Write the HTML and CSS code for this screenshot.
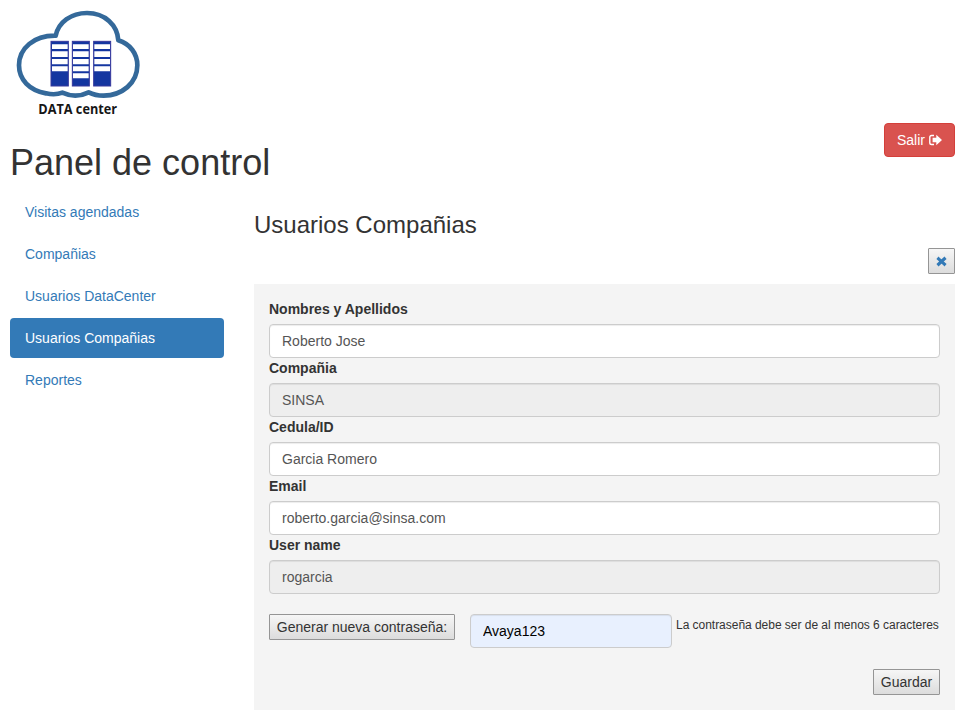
FILE: index.html
```html
<!DOCTYPE html>
<html lang="es">
<head>
<meta charset="utf-8">
<title>Panel de control</title>
<link rel="stylesheet" href="styles.css">
</head>
<body>
<header class="top">
  <svg class="logo" viewBox="0 0 480 375" role="img" aria-label="DATA center">
    <path d="M167 107C176 66 214 39 261 39C315 39 352 75 355 121C390 132 412 160 412 196C412 250 366 286 311 287C294 287 278 283 266 277C240 290 211 289 187 278C172 284 155 284 138 280C88 271 57 239 57 196C57 145 102 106 167 107Z" fill="none" stroke="#34699a" stroke-width="14" stroke-linejoin="round"/>
    <g fill="#1436a0" stroke="#36389c" stroke-width="3">
      <rect x="153" y="124" width="52" height="134"/>
      <rect x="217" y="124" width="51" height="134"/>
      <rect x="281" y="124" width="51" height="134"/>
    </g>
    <g fill="#fff">
      <path d="M156 133h47v14h-47zM156 154h47v17h-47zM156 177h47v16h-47zM156 199h47v15h-47z"/>
      <path d="M219 133h47v14h-47zM219 154h47v17h-47zM219 177h47v16h-47zM219 199h47v15h-47zM219 220h47v15h-47z"/>
      <path d="M283 133h47v14h-47zM283 154h47v17h-47zM283 177h47v16h-47zM283 199h47v15h-47z"/>
    </g>
    <text class="logo-text" x="115" y="341" textLength="236" lengthAdjust="spacingAndGlyphs">DATA center</text>
  </svg>
  <button class="exit" type="button">Salir
    <svg class="exit-icon" viewBox="0 0 13 12" aria-hidden="true"><path d="M5 1.5H2.6Q.8 1.5 .8 3.3V8.7Q.8 10.5 2.6 10.5H5" fill="none" stroke="#fff" stroke-width="1.4"/><path d="M7.3 .8L13 6L7.3 11.2V8.2H3.6V3.8H7.3Z" fill="#fff"/></svg>
  </button>
</header>
<h1 class="title">Panel de control</h1>
<div class="columns">
  <nav class="menu">
    <a class="item" href="#">Visitas agendadas</a>
    <a class="item" href="#">Compañias</a>
    <a class="item" href="#">Usuarios DataCenter</a>
    <a class="item active" href="#">Usuarios Compañias</a>
    <a class="item" href="#">Reportes</a>
  </nav>
  <main class="content">
    <h3 class="subtitle">Usuarios Compañias</h3>
    <div class="toolbar">
      <button class="btn close" type="button" aria-label="Cerrar"><svg class="close-icon" viewBox="0 0 11 11" aria-hidden="true"><path d="M2.6 2.8L8.4 8.2M8.4 2.8L2.6 8.2" stroke="#337ab7" stroke-width="3.1" stroke-linecap="square"/></svg></button>
    </div>
    <form class="panel">
      <label class="label" for="nombre">Nombres y Apellidos</label>
      <input class="field" id="nombre" value="Roberto Jose">
      <label class="label" for="comp">Compañia</label>
      <input class="field" id="comp" value="SINSA" readonly>
      <label class="label" for="cedula">Cedula/ID</label>
      <input class="field" id="cedula" value="Garcia Romero">
      <label class="label" for="email">Email</label>
      <input class="field" id="email" value="roberto.garcia@sinsa.com">
      <label class="label" for="user">User name</label>
      <input class="field" id="user" value="rogarcia" readonly>
      <div class="password">
        <button class="btn generate" type="button">Generar nueva contraseña:</button>
        <input class="field filled" value="Avaya123" aria-label="Contraseña">
        <span class="hint">La contraseña debe ser de al menos 6 caracteres</span>
      </div>
      <div class="actions"><button class="btn save" type="button">Guardar</button></div>
    </form>
  </main>
</div>
</body>
</html>
```
FILE: styles.css
```css
* { box-sizing: border-box; }
body {
  margin: 0;
  padding: 0 14px 0 10px;
  background: #fff;
  color: #333;
  font: 14px/20px "Liberation Sans", Arial, sans-serif;
}
input, button { font: inherit; color: inherit; }
.top { display: flex; justify-content: space-between; height: 143px; }
.logo { width: 160px; height: 125px; margin-left: -10px; }
.logo-text { font: bold 40px "Open Sans", "Noto Sans", sans-serif; fill: #161616; }
.exit {
  display: flex;
  align-items: center;
  gap: 4px;
  width: 71px;
  height: 34px;
  margin-top: 123px;
  padding: 0 12px;
  border: 1px solid #d43f3a;
  border-radius: 4px;
  background: #d9534f;
  color: #fff;
}
.exit-icon { flex: none; width: 13px; height: 12px; }
.title { height: 49px; margin: 0; font-size: 36px; font-weight: normal; line-height: 39px; }
.columns { display: flex; gap: 30px; }
.menu { display: flex; flex-direction: column; gap: 2px; width: 214px; }
.item { padding: 10px 15px; border-radius: 4px; color: #337ab7; text-decoration: none; }
.active { background: #337ab7; color: #fff; }
.content { flex: 1; min-width: 0; }
.subtitle { margin: 20px 0 10px; font-size: 24px; font-weight: normal; line-height: 26px; }
.toolbar { display: flex; justify-content: flex-end; height: 36px; }
.btn {
  height: 26px;
  padding: 0;
  border: 1px solid #959595;
  border-radius: 1px;
  background: linear-gradient(#f6f6f6, #dcdcdc);
  white-space: nowrap;
}
.close { display: flex; align-items: center; justify-content: center; width: 27px; }
.close-icon { width: 11px; height: 11px; }
.panel { height: 426px; padding: 15px; background: #f4f4f4; }
.label { display: block; margin-bottom: 5px; font-weight: bold; }
.field {
  display: block;
  width: 100%;
  height: 34px;
  padding: 6px 12px;
  border: 1px solid #ccc;
  border-radius: 4px;
  background: #fff;
  box-shadow: inset 0 1px 1px rgba(0, 0, 0, .075);
  color: #555;
}
.field[readonly] { background: #eee; }
.password { display: flex; align-items: flex-start; margin-top: 20px; }
.generate { flex: none; width: 186px; margin-right: 15px; }
.filled { flex: none; width: 202px; background: #e8f0fe; color: #000; }
.hint { margin-left: 4px; font-size: 12px; line-height: 22px; letter-spacing: -.03px; white-space: nowrap; }
.actions { display: flex; justify-content: flex-end; margin-top: 21px; }
.save { width: 67px; }
```
